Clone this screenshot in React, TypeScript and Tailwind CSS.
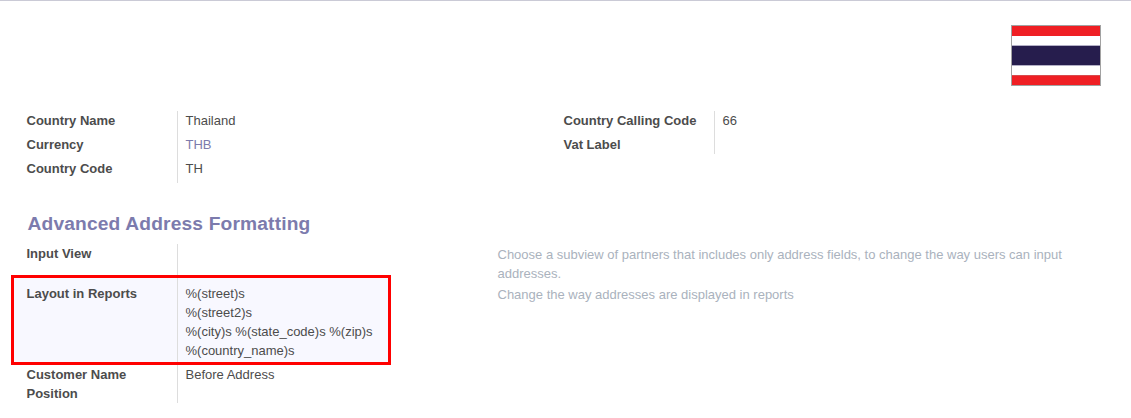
import React from "react";

interface FieldProps {
  label: React.ReactNode;
  children?: React.ReactNode;
  height?: string;
  link?: boolean;
}

function Field({ label, children, height = "h-6", link = false }: FieldProps) {
  return (
    <div className={`flex ${height}`}>
      <div className="w-[151.5px] shrink-0 border-r border-[#dddddd] font-bold">{label}</div>
      <div className={`whitespace-pre pl-[7.5px] ${link ? "text-[#7c7bad]" : ""}`}>{children}</div>
    </div>
  );
}

export default function App() {
  return (
    <main className="h-[418px] w-[1131px] overflow-hidden border-t border-[#cacad6] bg-white font-['Liberation_Sans',Arial,sans-serif] text-[13px] leading-[19px] text-[#4c4c4c]">
      <div className="flex justify-end pr-[30px] pt-6">
        <div className="flex h-[61px] w-[90px] flex-col border border-[#a2a2a2]">
          <div className="h-[10px] bg-[#ef1f24]" />
          <div className="h-[9px] bg-white" />
          <div className="h-[21px] border-y border-[#b3b0c6] bg-[#261d4d]" />
          <div className="h-[9px] bg-white" />
          <div className="grow border-t border-[#d84a4d] bg-[#ef1f24]" />
        </div>
      </div>
      <section className="flex pl-[26.5px] pt-[25px]">
        <div className="w-[537px]">
          <Field label="Country Name">Thailand</Field>
          <Field label="Currency" link>THB</Field>
          <Field label="Country Code">TH</Field>
        </div>
        <div>
          <Field label="Country Calling Code">66</Field>
          <Field label="Vat Label" height="h-[19px]" />
        </div>
      </section>
      <h2 className="mt-[29px] pl-[27.5px] text-[19.2px] font-bold leading-[24px] tracking-[0.16px] text-[#7c7bad]">Advanced Address Formatting</h2>
      <section className="mt-2 flex">
        <div className="w-[497.5px]">
          <div className="pl-[26.5px]">
            <Field label="Input View" height="h-[31px]" />
          </div>
          <div className="ml-[11px] h-[90px] w-[380px] border-[3px] border-[#ff0000] bg-[#f8f8ff] pl-[12.5px]">
            <Field height="h-[84px]" label={<div className="pt-[6px]">Layout in Reports</div>}>
              <div className="pt-[6px]">{"%(street)s\n%(street2)s\n%(city)s %(state_code)s %(zip)s\n%(country_name)s"}</div>
            </Field>
          </div>
          <div className="pl-[26.5px]">
            <Field height="h-[38px]" label={<>Customer Name<br />Position</>}>Before Address</Field>
          </div>
        </div>
        <div className="w-[600px] pt-px text-[#aab2bd]">
          <p>Choose a subview of partners that includes only address fields, to change the way users can input<br />addresses.</p>
          <p className="mt-[2px]">Change the way addresses are displayed in reports</p>
        </div>
      </section>
    </main>
  );
}
